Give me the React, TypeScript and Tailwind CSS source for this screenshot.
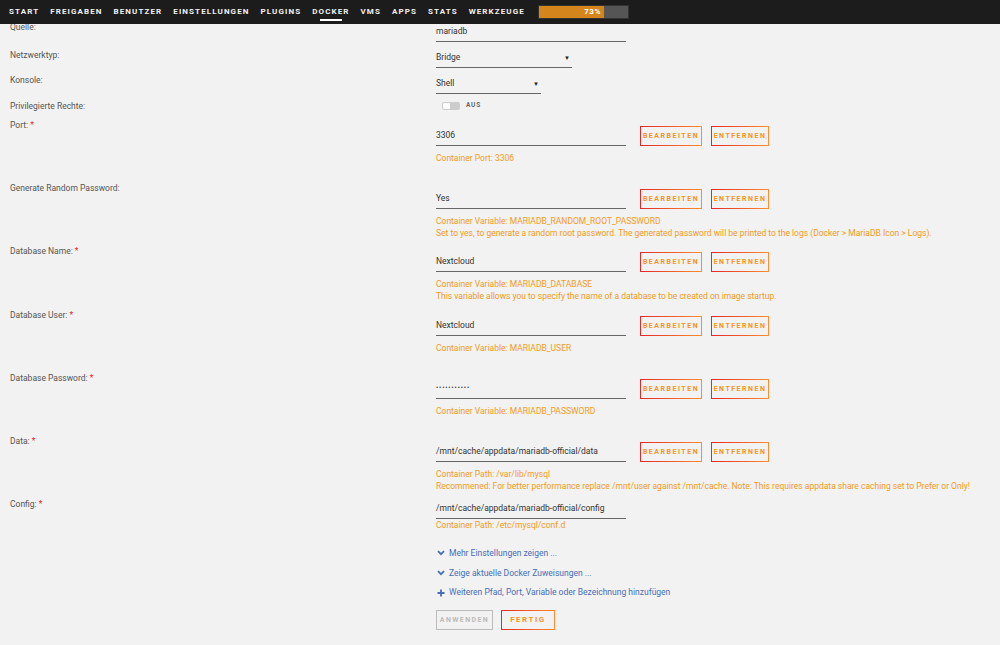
import type { ReactNode } from 'react';

const navItems = ['START', 'FREIGABEN', 'BENUTZER', 'EINSTELLUNGEN', 'PLUGINS', 'DOCKER', 'VMS', 'APPS', 'STATS', 'WERKZEUGE'];

function Label({ text, req }: { text: string; req?: boolean }) {
  return (
    <div className="w-[436px] shrink-0 pl-[10px] text-[8.5px] leading-[12px] text-[#555]">
      {text}
      {req && <span className="text-[#e22828]"> *</span>}
    </div>
  );
}

function Field({ value, w = 'w-[190px]' }: { value: string; w?: string }) {
  return (
    <div className={`${w} h-[20px] flex items-center border-b border-[#666] text-[8.5px] text-[#333]`}>{value}</div>
  );
}

function GradBtn({ children, className = '' }: { children: ReactNode; className?: string }) {
  return (
    <button className={`h-[20px] flex items-center justify-center border [border-image:linear-gradient(90deg,#e22828,#ff8c2f)_1] bg-transparent text-[7px] font-bold tracking-[1.5px] text-[#f7941d] ${className}`}>
      {children}
    </button>
  );
}

function ConfigRow({ label, req, value, desc, pw, h = 'h-[63px]' }: { label: string; req?: boolean; value: string; desc: string[]; pw?: boolean; h?: string }) {
  return (
    <div className={`flex ${h}`}>
      <Label text={label} req={req} />
      <div className="mt-[7px] flex flex-col">
        <div className="flex items-center">
          <div className={`w-[190px] h-[20px] flex items-center border-b border-[#666] text-[#333] ${pw ? 'text-[6.5px] tracking-[0.9px]' : 'text-[8.5px]'}`}>{value}</div>
          <GradBtn className="ml-[14px] w-[62px]">BEARBEITEN</GradBtn>
          <GradBtn className="ml-[9px] w-[58px]">ENTFERNEN</GradBtn>
        </div>
        <div className="mt-[6px] text-[8.5px] leading-[12px] text-[#f29b1d]">
          {desc.map((d) => (
            <div key={d}>{d}</div>
          ))}
        </div>
      </div>
    </div>
  );
}

function Select({ value, w }: { value: string; w: string }) {
  return (
    <div className={`${w} h-[20px] flex items-center justify-between border-b border-[#666] text-[8.5px] text-[#333]`}>
      <span>{value}</span>
      <span className="text-[6px] mr-[2px] text-[#222]">▼</span>
    </div>
  );
}

function Chevron() {
  return (
    <svg width="8" height="6" viewBox="0 0 8 6" className="ml-[1px] mr-[4px]">
      <path d="M1 1.2 L4 4.2 L7 1.2" stroke="#486dba" strokeWidth="1.8" fill="none" />
    </svg>
  );
}

function Plus() {
  return (
    <svg width="8" height="8" viewBox="0 0 8 8" className="ml-[1px] mr-[4px]">
      <path d="M4 0.5 V7.5 M0.5 4 H7.5" stroke="#486dba" strokeWidth="1.8" />
    </svg>
  );
}

export default function App() {
  return (
    <div className="w-[1000px] h-[645px] overflow-hidden bg-[#f2f2f2] font-['Roboto',sans-serif]">
      <div className="relative z-10 h-[24px] bg-[#1c1c1c] flex items-center pl-[9px]">
        {navItems.map((n) => (
          <div key={n} className="relative mr-[11px] text-[8px] font-bold tracking-[1.1px] text-[#f2f2f2]">
            {n}
            {n === 'DOCKER' && <div className="absolute left-[8px] right-[8px] top-[13px] h-[2px] bg-white" />}
          </div>
        ))}
        <div className="ml-[2px] w-[91px] h-[14px] border border-[#333] bg-[#555] flex">
          <div className="w-[73%] h-full bg-[#d4861c] flex items-center justify-end pr-[3px] text-[8px] font-bold text-white tracking-[0.5px]">73%</div>
        </div>
      </div>

      <div className="-mt-[3px]">
        <div className="flex h-[27px]">
          <Label text="Quelle:" />
          <div className="mt-[1px]"><Field value="mariadb" /></div>
        </div>
        <div className="flex h-[26px]">
          <div className="mt-[1px]"><Label text="Netzwerktyp:" /></div>
          <Select value="Bridge" w="w-[136px]" />
        </div>
        <div className="flex h-[26px]">
          <Label text="Konsole:" />
          <Select value="Shell" w="w-[105px]" />
        </div>
        <div className="flex h-[19px]">
          <Label text="Privilegierte Rechte:" />
          <div className="flex items-center h-[12px] ml-[6px]">
            <div className="w-[18px] h-[8px] rounded-[2px] bg-[#ccc] flex items-center pl-[1px]">
              <div className="w-[7px] h-[6px] rounded-[1px] bg-white" />
            </div>
            <span className="ml-[6px] text-[6.5px] font-bold tracking-[0.8px] text-[#666]">AUS</span>
          </div>
        </div>

        <ConfigRow label="Port:" req value="3306" desc={['Container Port: 3306']} />
        <ConfigRow
          label="Generate Random Password:"
          value="Yes"
          desc={[
            'Container Variable: MARIADB_RANDOM_ROOT_PASSWORD',
            'Set to yes, to generate a random root password. The generated password will be printed to the logs (Docker > MariaDB Icon > Logs).',
          ]}
        />
        <ConfigRow
          label="Database Name:"
          req
          h="h-[64px]"
          value="Nextcloud"
          desc={['Container Variable: MARIADB_DATABASE', 'This variable allows you to specify the name of a database to be created on image startup.']}
        />
        <ConfigRow label="Database User:" req value="Nextcloud" desc={['Container Variable: MARIADB_USER']} />
        <ConfigRow label="Database Password:" req pw value="•••••••••••" desc={['Container Variable: MARIADB_PASSWORD']} />
        <ConfigRow
          label="Data:"
          req
          value="/mnt/cache/appdata/mariadb-official/data"
          desc={[
            'Container Path: /var/lib/mysql',
            'Recommened: For better performance replace /mnt/user against /mnt/cache. Note: This requires appdata share caching set to Prefer or Only!',
          ]}
        />
        <div className="flex h-[45px]">
          <Label text="Config:" req />
          <div className="mt-[1px] flex flex-col">
            <Field value="/mnt/cache/appdata/mariadb-official/config" />
            <div className="text-[8.5px] leading-[12px] text-[#f29b1d]">Container Path: /etc/mysql/conf.d</div>
          </div>
        </div>

        <div className="pl-[436px] text-[8.5px] text-[#486dba]">
          <div className="h-[20px] flex items-center"><Chevron />Mehr Einstellungen zeigen ...</div>
          <div className="h-[20px] flex items-center"><Chevron />Zeige aktuelle Docker Zuweisungen ...</div>
          <div className="h-[19px] flex items-center"><Plus />Weiteren Pfad, Port, Variable oder Bezeichnung hinzufügen</div>
          <div className="mt-[8px] flex">
            <button className="w-[57px] h-[20px] border border-[#bbb] text-[7px] font-bold tracking-[1.4px] text-[#bbb]">ANWENDEN</button>
            <GradBtn className="ml-[8px] w-[54px] text-[8px]">FERTIG</GradBtn>
          </div>
        </div>
      </div>
    </div>
  );
}
